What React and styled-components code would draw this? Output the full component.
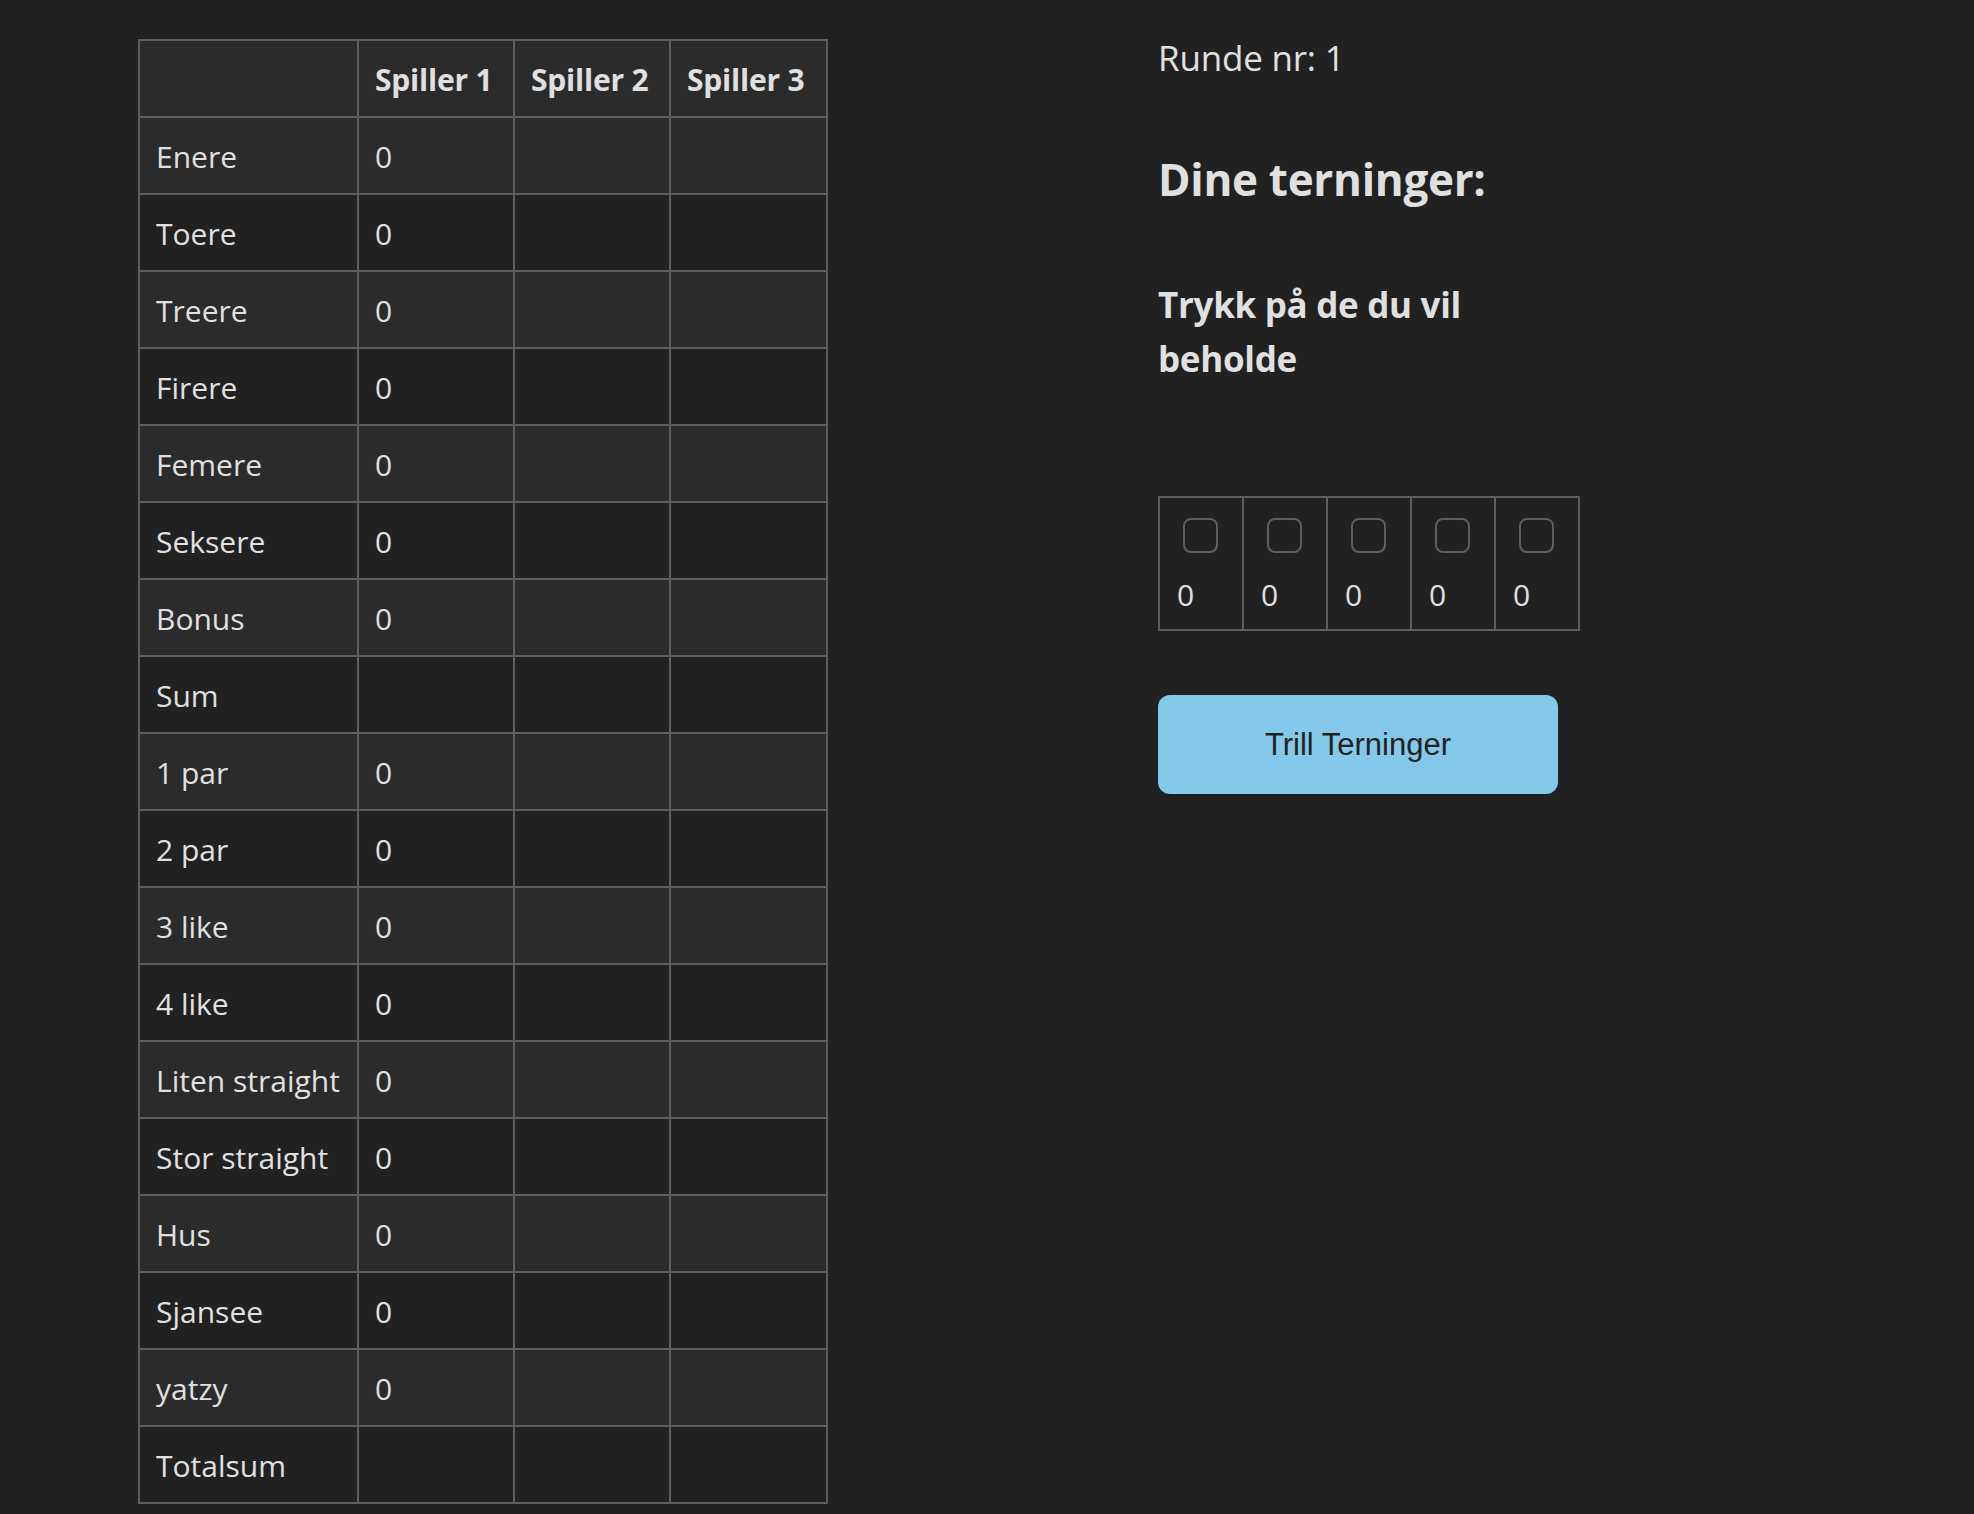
import styled, { createGlobalStyle } from "styled-components";

const ROWS = [
  ["Enere", "0"],
  ["Toere", "0"],
  ["Treere", "0"],
  ["Firere", "0"],
  ["Femere", "0"],
  ["Seksere", "0"],
  ["Bonus", "0"],
  ["Sum", ""],
  ["1 par", "0"],
  ["2 par", "0"],
  ["3 like", "0"],
  ["4 like", "0"],
  ["Liten straight", "0"],
  ["Stor straight", "0"],
  ["Hus", "0"],
  ["Sjansee", "0"],
  ["yatzy", "0"],
  ["Totalsum", ""],
];

const PLAYERS = ["Spiller 1", "Spiller 2", "Spiller 3"];
const COL_WIDTHS = [219, 156, 156, 157];
const DICE = [0, 0, 0, 0, 0];

const GlobalStyle = createGlobalStyle`
  html, body {
    margin: 0;
    padding: 0;
    background-color: #212121;
    color: #e0e0e0;
    font-family: "Open Sans", "Noto Sans", sans-serif;
  }
`;

const App = () => {
  return (
    <>
      <GlobalStyle />
      <S.Page>
        <S.Table>
          <colgroup>
            {COL_WIDTHS.map((w, i) => (
              <S.Col key={i} $width={w} />
            ))}
          </colgroup>
          <thead>
            <S.Row>
              <S.Head />
              {PLAYERS.map((p) => (
                <S.Head key={p}>{p}</S.Head>
              ))}
            </S.Row>
          </thead>
          <tbody>
            {ROWS.map(([label, value]) => (
              <S.Row key={label}>
                <S.Cell>{label}</S.Cell>
                <S.Cell>{value}</S.Cell>
                <S.Cell />
                <S.Cell />
              </S.Row>
            ))}
          </tbody>
        </S.Table>

        <S.Side>
          <S.Round>Runde nr: 1</S.Round>
          <S.Title>Dine terninger:</S.Title>
          <S.Hint>Trykk på de du vil beholde</S.Hint>
          <S.DiceRow>
            {DICE.map((d, i) => (
              <S.Die key={i}>
                <S.Check type="checkbox" />
                <S.DieValue>{d}</S.DieValue>
              </S.Die>
            ))}
          </S.DiceRow>
          <S.RollButton>Trill Terninger</S.RollButton>
        </S.Side>
      </S.Page>
    </>
  );
};

export default App;

const Page = styled.div`
  display: flex;
  align-items: flex-start;
  gap: 330px;
  padding: 39px 0 0 138px;
  min-height: 1514px;
  box-sizing: border-box;
`;

const Table = styled.table`
  border-collapse: collapse;
  table-layout: fixed;
  width: 690px;
  border: 2px solid #5e5e5e;
`;

const Col = styled.col`
  width: ${({ $width }) => $width}px;
`;

const Row = styled.tr`
  height: 77px;
  background-color: #212121;
  thead &,
  tbody &:nth-child(odd) {
    background-color: #2b2b2b;
  }
`;

const Head = styled.th`
  border: 2px solid #5e5e5e;
  padding: 2px 16px 0;
  text-align: left;
  font-size: 30px;
  font-weight: 700;
  white-space: nowrap;
  letter-spacing: -0.2px;
`;

const Cell = styled.td`
  border: 2px solid #5e5e5e;
  padding: 2px 16px 0;
  font-size: 30px;
  white-space: nowrap;
`;

const Side = styled.div`
  display: flex;
  flex-direction: column;
  align-items: flex-start;
  width: 421px;
`;

const Round = styled.p`
  margin: 0;
  font-size: 35px;
  line-height: 38px;
  letter-spacing: -0.2px;
`;

const Title = styled.h2`
  margin: 72px 0 0;
  font-size: 44px;
  font-weight: 700;
  line-height: 60px;
  letter-spacing: -0.3px;
`;

const Hint = styled.h3`
  margin: 69px 0 0;
  font-size: 35px;
  font-weight: 700;
  line-height: 54px;
  letter-spacing: -0.3px;
`;

const DiceRow = styled.div`
  display: flex;
  margin-top: 110px;
  border: 2px solid #5e5e5e;
`;

const Die = styled.div`
  display: flex;
  flex-direction: column;
  width: 84px;
  height: 131px;
  box-sizing: border-box;
  padding: 20px 0 0 17px;
  border-left: 2px solid #5e5e5e;
  &:first-child {
    border-left: none;
    width: 82px;
  }
`;

const Check = styled.input`
  appearance: none;
  width: 35px;
  height: 35px;
  margin: 0 0 0 6px;
  border: 2px solid #5e5e5e;
  border-radius: 8px;
  background: transparent;
  box-sizing: border-box;
  cursor: pointer;
`;

const DieValue = styled.span`
  margin-top: 22px;
  font-size: 30px;
  line-height: 40px;
`;

const RollButton = styled.button`
  margin-top: 64px;
  width: 400px;
  height: 99px;
  border: none;
  border-radius: 12px;
  background-color: #84c8ea;
  color: #222222;
  font-family: "Liberation Sans", Arial, sans-serif;
  font-size: 31px;
  cursor: pointer;
`;

const S = {
  Page,
  Table,
  Col,
  Row,
  Head,
  Cell,
  Side,
  Round,
  Title,
  Hint,
  DiceRow,
  Die,
  Check,
  DieValue,
  RollButton,
};
